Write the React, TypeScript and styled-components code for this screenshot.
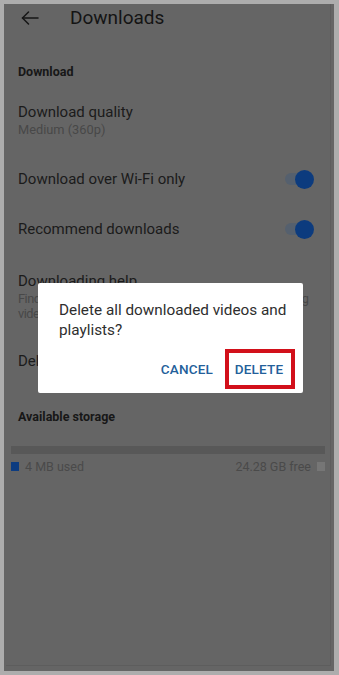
import React from 'react';
import styled, { createGlobalStyle } from 'styled-components';

const GlobalStyle = createGlobalStyle`
    html, body {
        margin: 0;
        padding: 0;
        background: #adadad;
    }
    body {
        font-family: Roboto, "Liberation Sans", Arial, sans-serif;
        -webkit-font-smoothing: antialiased;
    }
    * {
        box-sizing: border-box;
    }
`;

const Frame = styled.div`
    width: 339px;
    height: 675px;
    padding: 4px 5px 4px 4px;
    background: #adadad;
`;

const Screen = styled.div`
    position: relative;
    width: 330px;
    height: 667px;
    background: #656565;
    overflow: hidden;
    color: #191919;
    &::after {
        content: '';
        position: absolute;
        left: 2px;
        top: 0;
        right: 3px;
        bottom: 5px;
        border-right: 1px solid rgba(0, 0, 0, 0.07);
        border-bottom: 1px solid rgba(0, 0, 0, 0.07);
        pointer-events: none;
    }
`;

const Header = styled.header`
    height: 27px;
    display: flex;
    align-items: center;
    padding-left: 17px;
    > h1 {
        margin: 0 0 0 31px;
        font-size: 19px;
        font-weight: 400;
        color: #141414;
        line-height: 27px;
    }
`;

const SectionLabel = styled.div<{ top: number }>`
    margin-top: ${p => p.top}px;
    padding-left: 14px;
    font-size: 12.5px;
    font-weight: 700;
    line-height: 21px;
    color: #171717;
`;

const Block = styled.div<{ top: number }>`
    padding: ${p => p.top}px 14px 0;
`;

const Title = styled.div`
    font-size: 15px;
    line-height: 20px;
    color: #1b1b1b;
    white-space: nowrap;
`;

const Sub = styled.div<{ lh?: number; tight?: boolean }>`
    font-size: 12.8px;
    line-height: ${p => p.lh || 16}px;
    letter-spacing: ${p => (p.tight ? '-0.5px' : '0')};
    color: #484848;
    white-space: nowrap;
`;

const Row = styled.div`
    height: 50px;
    display: flex;
    align-items: center;
    justify-content: space-between;
    padding: 0 20px 0 14px;
`;

const Switch = styled.div`
    position: relative;
    width: 29px;
    height: 19px;
    display: flex;
    align-items: center;
    .track {
        width: 25px;
        height: 12px;
        border-radius: 6px;
        background: #55606e;
    }
    .knob {
        position: absolute;
        right: 0;
        top: 0;
        width: 19px;
        height: 19px;
        border-radius: 50%;
        background: #0c3b7e;
    }
`;

const StorageBar = styled.div`
    margin: 19px 9px 0 7px;
    height: 8px;
    background: #585858;
`;

const Legend = styled.div`
    margin: 4px 9px 0 7px;
    height: 16px;
    display: flex;
    align-items: center;
    font-size: 12.5px;
    color: #4a4a4a;
    > span {
        display: flex;
        align-items: center;
        gap: 6px;
    }
`;

const Swatch = styled.i<{ color: string }>`
    display: block;
    width: 8px;
    height: 9px;
    background: ${p => p.color};
`;

const Scrim = styled.div`
    position: absolute;
    inset: 0;
    display: flex;
    align-items: center;
    justify-content: center;
    padding-left: 3px;
    z-index: 1;
`;

const Dialog = styled.div`
    width: 265px;
    height: 110px;
    background: #fff;
    border-radius: 2px;
    display: flex;
    flex-direction: column;
    > p {
        margin: 0;
        padding: 17px 12px 0 21px;
        font-size: 15.3px;
        line-height: 20px;
        color: #2e2e2e;
    }
`;

const Actions = styled.div`
    margin-top: 9px;
    padding: 0 8px;
    display: flex;
    justify-content: flex-end;
`;

const TextButton = styled.button<{ highlighted?: boolean }>`
    height: 40px;
    padding: ${p => (p.highlighted ? '0 2px 0 0' : '0 12px')};
    background: transparent;
    border: ${p => (p.highlighted ? '4.5px solid #d2101a' : '0')};
    width: ${p => (p.highlighted ? '70px' : 'auto')};
    font-family: Roboto, "Liberation Sans", Arial, sans-serif;
    font-size: 13.5px;
    font-weight: 500;
    letter-spacing: 0.2px;
    color: #23609a;
    cursor: pointer;
`;

function BackArrow() {
    return (
        <svg width="18" height="14" viewBox="0 0 18 14" fill="none" stroke="#161616" strokeWidth="1.5" strokeLinecap="round" strokeLinejoin="round">
            <path d="M1.5 7H17" />
            <path d="M7.5 1L1.5 7L7.5 13" />
        </svg>
    );
}

function Toggle() {
    return (
        <Switch>
            <div className="track" />
            <div className="knob" />
        </Switch>
    );
}

export default function App(): React.ReactElement {
    return (
        <Frame>
            <GlobalStyle />
            <Screen>
                <Header>
                    <BackArrow />
                    <h1>Downloads</h1>
                </Header>
                <SectionLabel top={30}>Download</SectionLabel>
                <Block top={20}>
                    <Title>Download quality</Title>
                    <Sub>Medium (360p)</Sub>
                </Block>
                <div style={{ height: 16 }} />
                <Row>
                    <Title>Download over Wi-Fi only</Title>
                    <Toggle />
                </Row>
                <Row>
                    <Title>Recommend downloads</Title>
                    <Toggle />
                </Row>
                <Block top={17}>
                    <Title>Downloading help</Title>
                    <Sub lh={15} tight>Find answers to common questions about downloading<br />videos</Sub>
                </Block>
                <div style={{ height: 15 }} />
                <Row>
                    <Title>Delete downloads</Title>
                </Row>
                <SectionLabel top={20}>Available storage</SectionLabel>
                <StorageBar />
                <Legend>
                    <span><Swatch color="#0d3c80" />4 MB used</span>
                    <span style={{ marginLeft: 'auto' }}>24.28 GB free<Swatch color="#767676" /></span>
                </Legend>
                <Scrim>
                    <Dialog>
                        <p>Delete all downloaded videos and playlists?</p>
                        <Actions>
                            <TextButton>CANCEL</TextButton>
                            <TextButton highlighted>DELETE</TextButton>
                        </Actions>
                    </Dialog>
                </Scrim>
            </Screen>
        </Frame>
    );
}
